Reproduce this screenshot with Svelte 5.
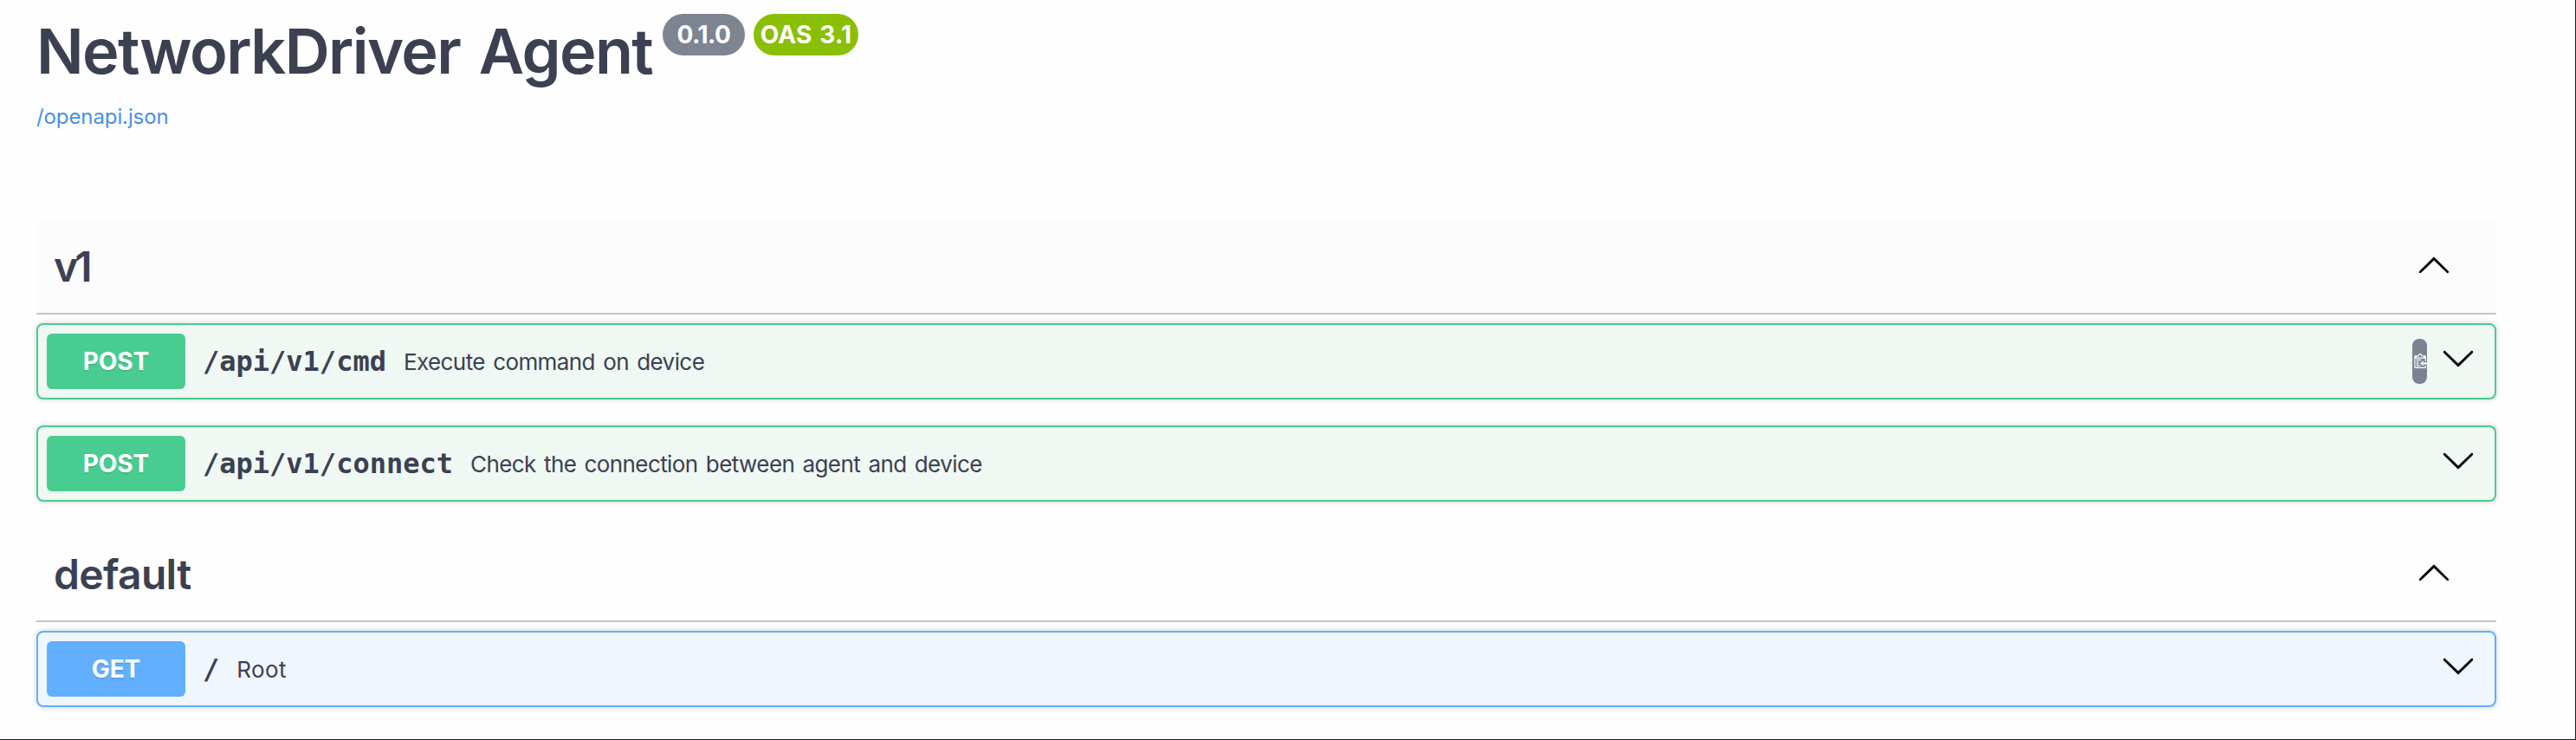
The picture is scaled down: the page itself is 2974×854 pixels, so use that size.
<script>
  const sections = [
    {
      name: 'v1',
      hovered: true,
      operations: [
        { method: 'post', path: '/api/v1/cmd', summary: 'Execute command on device', copy: true },
        { method: 'post', path: '/api/v1/connect', summary: 'Check the connection between agent and device' }
      ]
    },
    {
      name: 'default',
      operations: [{ method: 'get', path: '/', summary: 'Root' }]
    }
  ];
</script>

<main>
  <header>
    <div class="heading">
      <h1>NetworkDriver Agent</h1>
      <span class="badge version">0.1.0</span>
      <span class="badge oas">OAS 3.1</span>
    </div>
    <a href="/openapi.json">/openapi.json</a>
  </header>

  {#each sections as section}
    <section>
      <h3 class:hovered={section.hovered}>
        <span class={section.name}>{section.name}</span>
        <svg class="arrow" viewBox="0 0 20 20"><path d="M17.418 14.908c.272.268.709.268.979 0s.271-.701 0-.969l-7.908-7.83c-.27-.268-.707-.268-.979 0l-7.908 7.83c-.27.268-.27.701 0 .969.271.268.709.268.979 0L10 7.767l7.418 7.141z" /></svg>
      </h3>
      <div class="operations">
        {#each section.operations as op}
          <div class="operation {op.method}">
            <span class="method">{op.method.toUpperCase()}</span>
            <code>{op.path}</code>
            <span class="summary">{op.summary}</span>
            {#if op.copy}
              <button class="copy" aria-label="Copy to clipboard">
                <svg viewBox="0 0 15 16" width="17" height="18"><path fill="#fff" fill-rule="evenodd" d="M4 12h4v1H4v-1zm5-6H4v1h5V6zm2 3V7l-3 3 3 3v-2h5V9h-5zM6.5 8H4v1h2.5V8zM4 11h2.5v-1H4v1zm9 1h1v2c-.02.28-.11.52-.3.7-.19.18-.42.28-.7.3H3c-.55 0-1-.45-1-1V3c0-.55.45-1 1-1h3c0-1.11.89-2 2-2 1.11 0 2 .89 2 2h3c.55 0 1 .45 1 1v5h-1V5H3v9h10v-2zM4 4h8c0-.55-.45-1-1-1h-1c-.55 0-1-.45-1-1s-.45-1-1-1-1 .45-1 1-.45 1-1 1H5c-.55 0-1 .45-1 1z" /></svg>
              </button>
            {/if}
            <svg class="arrow" viewBox="0 0 20 20"><path d="M17.418 6.109c.272-.268.709-.268.979 0s.271.701 0 .969l-7.908 7.83c-.27.268-.707.268-.979 0l-7.908-7.83c-.27-.268-.27-.701 0-.969.271-.268.709-.268.979 0L10 13.25l7.418-7.141z" /></svg>
          </div>
        {/each}
      </div>
    </section>
  {/each}
</main>

<style>
  main {
    box-sizing: border-box;
    width: 2974px;
    height: 854px;
    overflow: hidden;
    padding: 0 91px 0 42px;
    background: #fefefe;
    border-right: 1px solid #1c1b20;
    border-bottom: 1px solid #1c1b20;
    color: #3b4151;
    font-family: Inter, "Liberation Sans", sans-serif;
  }
  header {
    box-sizing: border-box;
    height: 254px;
    padding-top: 16px;
  }
  .heading {
    display: flex;
    align-items: flex-start;
    height: 86px;
  }
  h1 {
    flex: none;
    width: 723px;
    margin: 0;
    font-size: 72px;
    line-height: 86px;
    font-weight: 600;
    letter-spacing: -1.6px;
    word-spacing: 5px;
    white-space: nowrap;
  }
  .badge {
    display: flex;
    align-items: center;
    justify-content: center;
    height: 48px;
    border-radius: 24px;
    color: #fff;
    font-size: 28px;
    font-weight: 650;
    white-space: nowrap;
  }
  .version {
    width: 95px;
    margin-right: 10px;
    background: #7d8492;
    letter-spacing: -0.5px;
  }
  .oas {
    width: 121px;
    background: #89bf04;
    letter-spacing: 0.2px;
    word-spacing: 2px;
  }
  a {
    display: block;
    width: max-content;
    margin-top: 18px;
    font-size: 24px;
    line-height: 29px;
    letter-spacing: -0.1px;
    color: #4990e2;
    text-decoration: none;
  }
  h3 {
    box-sizing: border-box;
    display: flex;
    align-items: center;
    justify-content: space-between;
    height: 109px;
    margin: 0 0 10px;
    padding: 0 52px 0 20px;
    border-bottom: 2px solid #c5c5cc;
    font-size: 48px;
    font-weight: 600;
  }
  h3.hovered {
    background: #fcfcfc;
  }
  .v1 {
    letter-spacing: -4px;
  }
  .default {
    letter-spacing: -0.7px;
  }
  .arrow {
    flex: none;
    width: 40px;
    height: 40px;
    margin-top: -5px;
  }
  .operations {
    display: flex;
    flex-direction: column;
    gap: 30px;
    margin-bottom: 30px;
  }
  .operation {
    box-sizing: border-box;
    display: flex;
    align-items: center;
    height: 88px;
    padding: 0 22px 0 10px;
    border: 2px solid;
    border-radius: 8px;
    box-shadow: 0 0 6px rgba(0, 0, 0, 0.19);
  }
  .operation .arrow {
    margin-top: -8px;
    margin-left: auto;
  }
  .post {
    border-color: #49cc90;
    background: #eff8f3;
  }
  .get {
    border-color: #61affe;
    background: #eff6fe;
  }
  .method {
    flex: none;
    width: 160px;
    border-radius: 6px;
    color: #fff;
    font-size: 28px;
    font-weight: 650;
    line-height: 64px;
    letter-spacing: -0.1px;
    text-align: center;
    text-shadow: 0 2px 0 rgba(0, 0, 0, 0.1);
  }
  .post .method {
    background: #49cc90;
  }
  .get .method {
    background: #61affe;
  }
  code {
    margin-left: 20px;
    font: bold 32px/64px "DejaVu Sans Mono", monospace;
  }
  .summary {
    margin: 2px 0 0 20px;
    font-size: 26px;
    line-height: 64px;
    letter-spacing: -0.58px;
    word-spacing: 2.5px;
    white-space: nowrap;
  }
  .get .summary {
    letter-spacing: 0.4px;
  }
  .copy {
    flex: none;
    display: flex;
    align-items: center;
    width: 17px;
    height: 52px;
    margin-left: auto;
    padding: 0;
    border: 0;
    border-radius: 8px;
    background: #7d8293;
    overflow: hidden;
  }
  .copy svg {
    flex: none;
  }
  .operation .copy + .arrow {
    margin-left: 16px;
  }
</style>
